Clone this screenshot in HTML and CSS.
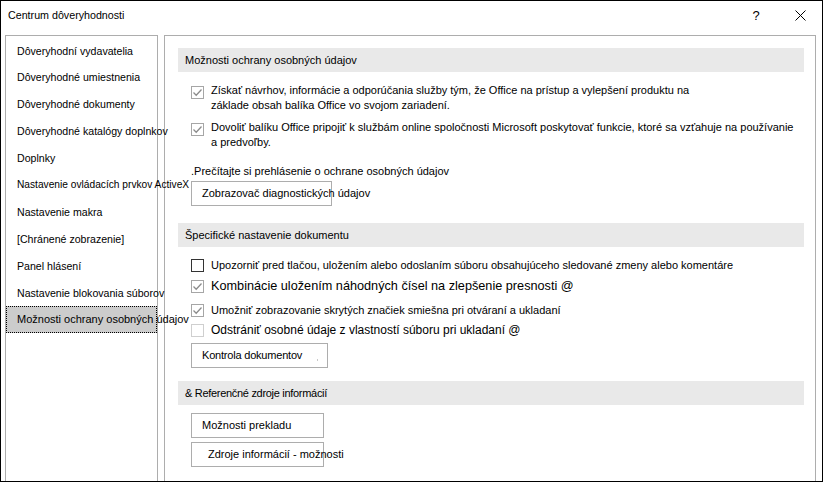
FILE: index.html
```html
<!DOCTYPE html>
<html lang="sk">
<head>
<meta charset="utf-8">
<title>Centrum dôveryhodnosti</title>
<link rel="stylesheet" href="styles.css">
</head>
<body>
<div class="window">
  <header class="titlebar">
    <span class="title">Centrum dôveryhodnosti</span>
    <span class="caption-btn help">?</span>
    <span class="caption-btn close">
      <svg width="11" height="11" viewBox="0 0 11 11"><path d="M0.5 0.5 L10.5 10.5 M10.5 0.5 L0.5 10.5" stroke="#000" stroke-width="1" fill="none"/></svg>
    </span>
  </header>

  <div class="body">
    <nav class="nav">
      <div class="nav-item">Dôveryhodní vydavatelia</div>
      <div class="nav-item">Dôveryhodné umiestnenia</div>
      <div class="nav-item">Dôveryhodné dokumenty</div>
      <div class="nav-item">Dôveryhodné katalógy doplnkov</div>
      <div class="nav-item">Doplnky</div>
      <div class="nav-item small">Nastavenie ovládacích prvkov ActiveX</div>
      <div class="nav-item">Nastavenie makra</div>
      <div class="nav-item">[Chránené zobrazenie]</div>
      <div class="nav-item">Panel hlásení</div>
      <div class="nav-item">Nastavenie blokovania súborov</div>
      <div class="nav-item selected">Možnosti ochrany osobných údajov</div>
    </nav>

    <main class="pane">
      <section class="section">
        <div class="section-head">Možnosti ochrany osobných údajov</div>
        <div class="opt first">
          <span class="box checked"><svg width="11" height="11" viewBox="0 0 11 11"><path d="M1.5 5.5 L4.2 8.2 L9.5 2.5" stroke="#8c8c8c" stroke-width="1.3" fill="none"/></svg></span>
          <span class="opt-text">Získať návrhov, informácie a odporúčania služby tým, že Office na prístup a vylepšení produktu na<br>základe obsah balíka Office vo svojom zariadení.</span>
        </div>
        <div class="opt second">
          <span class="box checked"><svg width="11" height="11" viewBox="0 0 11 11"><path d="M1.5 5.5 L4.2 8.2 L9.5 2.5" stroke="#8c8c8c" stroke-width="1.3" fill="none"/></svg></span>
          <span class="opt-text">Dovoliť balíku Office pripojiť k službám online spoločnosti Microsoft poskytovať funkcie, ktoré sa vzťahuje na používanie<br>a predvoľby.</span>
        </div>
        <div class="statement">.Prečítajte si prehlásenie o ochrane osobných údajov</div>
        <div class="btn btn-diag">Zobrazovač diagnostických údajov</div>
      </section>

      <section class="section doc">
        <div class="section-head">Špecifické nastavenie dokumentu</div>
        <div class="row r1">
          <span class="box empty"></span>
          <span class="row-text t1">Upozorniť pred tlačou, uložením alebo odoslaním súboru obsahujúceho sledované zmeny alebo komentáre</span>
        </div>
        <div class="row r2">
          <span class="box checked"><svg width="11" height="11" viewBox="0 0 11 11"><path d="M1.5 5.5 L4.2 8.2 L9.5 2.5" stroke="#8c8c8c" stroke-width="1.3" fill="none"/></svg></span>
          <span class="row-text t2">Kombinácie uložením náhodných čísel na zlepšenie presnosti @</span>
        </div>
        <div class="row r3">
          <span class="box checked"><svg width="11" height="11" viewBox="0 0 11 11"><path d="M1.5 5.5 L4.2 8.2 L9.5 2.5" stroke="#8c8c8c" stroke-width="1.3" fill="none"/></svg></span>
          <span class="row-text t3">Umožniť zobrazovanie skrytých značiek smiešna pri otváraní a ukladaní</span>
        </div>
        <div class="row r4">
          <span class="box disabled"></span>
          <span class="row-text t4">Odstrániť osobné údaje z vlastností súboru pri ukladaní @</span>
        </div>
        <div class="btn btn-inspect">Kontrola dokumentov<span class="tick"></span></div>
      </section>

      <section class="section refs">
        <div class="section-head tight">&amp; Referenčné zdroje informácií</div>
        <div class="btn btn-translate">Možnosti prekladu</div>
        <div class="btn btn-sources">Zdroje informácií - možnosti</div>
      </section>
    </main>
  </div>
</div>
</body>
</html>
```

FILE: styles.css
```css
* { box-sizing: border-box; }

html, body {
  margin: 0;
  padding: 0;
  background: #fff;
}

.window {
  width: 823px;
  height: 482px;
  border: 1px solid #000;
  background: #fff;
  display: flex;
  flex-direction: column;
  overflow: hidden;
  font-family: "Liberation Sans", Arial, sans-serif;
  font-size: 11px;
  color: #000;
}

/* caption bar */
.titlebar {
  flex: none;
  height: 34px;
  display: flex;
  align-items: center;
  padding: 0 0 6px 7px;
}

.title {
  font-size: 10.7px;
}

.caption-btn {
  width: 44px;
  height: 26px;
  display: flex;
  align-items: center;
  justify-content: center;
}

.help {
  margin-left: auto;
  font-size: 13px;
}

/* dialog body: category list + options pane */
.body {
  flex: 1;
  min-height: 0;
  display: flex;
  gap: 6px;
  padding: 0 6px 0 4px;
}

.nav {
  position: relative;
  z-index: 1;
  width: 153px;
  flex: none;
  border: 1px solid #adadad;
  border-bottom: none;
  padding-top: 1.5px;
}

.nav-item {
  height: 26.9px;
  line-height: 26.9px;
  padding-left: 11px;
  white-space: nowrap;
  font-size: 10.6px;
}

.nav-item.small {
  font-size: 10.2px;
}

.nav-item.selected {
  background: #cccccc;
  border: 1px dotted #000;
  padding-left: 10px;
  line-height: 24.9px;
  font-size: 11px;
}

.pane {
  width: 652px;
  flex: none;
  border: 1px solid #adadad;
  border-bottom: none;
  padding: 12px 11px 0 13px;
}

.section-head {
  height: 24px;
  line-height: 24px;
  background: #e9e9e9;
  padding-left: 7px;
  white-space: nowrap;
}

.section-head.tight {
  letter-spacing: -0.3px;
}

/* checkboxes */
.box {
  flex: none;
  width: 13px;
  height: 13px;
  border: 1px solid #a6a6a6;
  background: #fff;
  display: flex;
  align-items: center;
  justify-content: center;
}

.box.empty {
  border-color: #333;
}

.box.disabled {
  border-color: #cfcfcf;
}

/* privacy section */
.opt {
  display: flex;
  align-items: flex-start;
  gap: 7px;
  margin-left: 13px;
  line-height: 15px;
  white-space: nowrap;
}

.opt .box {
  margin-top: 3px;
}

.opt.first { margin-top: 11px; }
.opt.second { margin-top: 7px; }

.statement {
  margin: 14px 0 0 13px;
  line-height: 15px;
  white-space: nowrap;
}

.btn {
  height: 25px;
  border: 1px solid #adadad;
  background: #fff;
  line-height: 23px;
  padding-left: 10px;
  margin-left: 13px;
  white-space: nowrap;
}

.btn-diag {
  width: 141px;
  margin-top: 2px;
}

/* document settings */
.section.doc { margin-top: 17px; }

.row {
  display: flex;
  align-items: center;
  gap: 7px;
  height: 20px;
  margin-left: 13px;
  white-space: nowrap;
}

.row.r1 { margin-top: 8px; }
.row.r2 { margin-top: 1px; }
.row.r3 { margin-top: 4px; }
.row.r4 { margin-top: 0; }

.t1 { font-size: 11px; }
.t2 { font-size: 12.7px; }
.t3 { font-size: 11px; }
.t4 { font-size: 12px; }

.btn-inspect {
  width: 137px;
  margin-top: 3px;
  position: relative;
  letter-spacing: -0.2px;
}

.tick {
  position: absolute;
  left: 125px;
  top: 15px;
  width: 1px;
  height: 2px;
  background: #c8c8c8;
}

/* reference sources */
.section.refs { margin-top: 13px; }

.btn-translate {
  width: 133px;
  margin-top: 8px;
}

.btn-sources {
  width: 133px;
  margin-top: 4px;
  padding-left: 16px;
}
```
